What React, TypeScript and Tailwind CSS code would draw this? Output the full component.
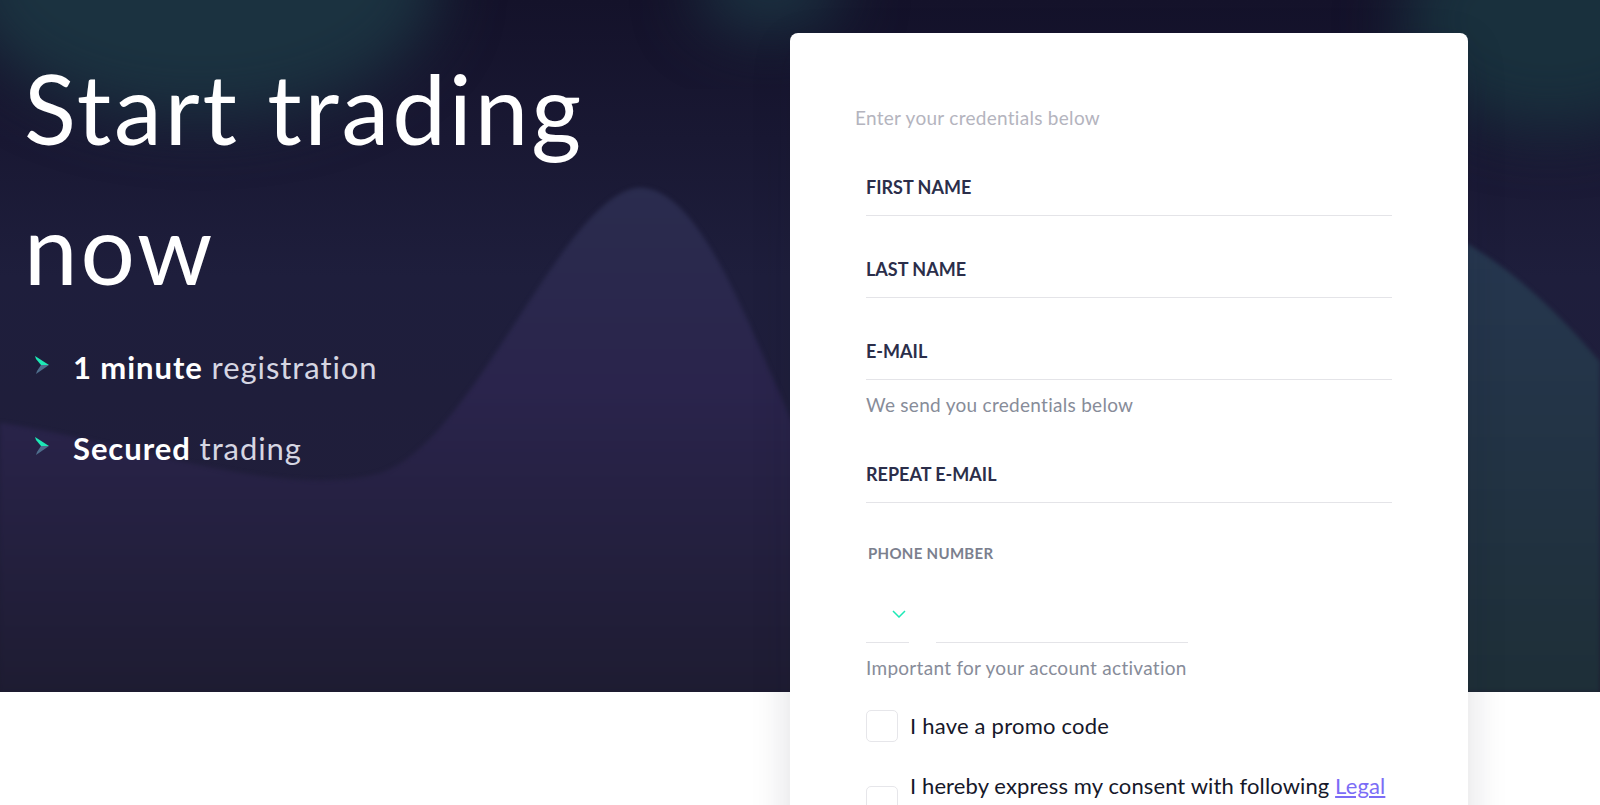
function HeroBackground() {
  return (
    <div className="absolute inset-x-0 top-0 h-[692px] overflow-hidden">
      <svg className="h-full w-full" viewBox="0 0 1600 692" preserveAspectRatio="none">
        <defs>
          <linearGradient id="base" x1="0" y1="0" x2="0" y2="692" gradientUnits="userSpaceOnUse">
            <stop offset="0" stopColor="#14122a" />
            <stop offset="0.4" stopColor="#1e1e3c" />
            <stop offset="0.75" stopColor="#201e3a" />
            <stop offset="1" stopColor="#1c1b2f" />
          </linearGradient>
          <linearGradient id="hill" x1="0" y1="190" x2="0" y2="692" gradientUnits="userSpaceOnUse">
            <stop offset="0" stopColor="#2a2c4e" />
            <stop offset="0.4" stopColor="#2a244c" />
            <stop offset="1" stopColor="#1e1c32" />
          </linearGradient>
          <linearGradient id="rightHill" x1="0" y1="200" x2="0" y2="692" gradientUnits="userSpaceOnUse">
            <stop offset="0" stopColor="#273852" />
            <stop offset="1" stopColor="#1e2f38" />
          </linearGradient>
          <filter id="soft" x="-60%" y="-60%" width="220%" height="220%" colorInterpolationFilters="sRGB">
            <feGaussianBlur stdDeviation="30" />
          </filter>
          <filter id="edge" x="-10%" y="-10%" width="120%" height="120%" colorInterpolationFilters="sRGB">
            <feGaussianBlur stdDeviation="2" />
          </filter>
        </defs>

        <rect width="1600" height="692" fill="url(#base)" />

        {/* teal glows along the top */}
        <ellipse cx="200" cy="-20" rx="240" ry="140" fill="#1b3240" filter="url(#soft)" />
        <ellipse cx="770" cy="-10" rx="75" ry="45" fill="#1b3140" filter="url(#soft)" />
        <ellipse cx="1550" cy="20" rx="150" ry="110" fill="#19303d" filter="url(#soft)" />

        {/* centre mountain + valley */}
        <path
          d="M0,423 C120,440 280,500 377,474 C470,450 560,200 636,188 C700,182 750,330 800,440 L1000,692 L0,692 Z"
          fill="url(#hill)"
          filter="url(#edge)"
        />

        {/* right mountain slope */}
        <path
          d="M1250,150 C1350,180 1420,220 1468,244 C1520,275 1565,320 1600,362 L1600,692 L1250,692 Z"
          fill="url(#rightHill)"
          filter="url(#edge)"
        />
      </svg>
    </div>
  )
}

function BulletIcon() {
  return (
    <svg width="14" height="18" viewBox="0 0 14 18" className="mt-[9px] shrink-0">
      <polygon points="0,0 14,9 6,9 1,3" fill="#1de9b6" />
      <polygon points="6,9 14,9 1,18 2,15" fill="#4e6d8c" />
    </svg>
  )
}

function LeftColumn() {
  const bullets = [
    { strong: '1 minute', rest: 'registration' },
    { strong: 'Secured', rest: 'trading' },
  ]

  return (
    <div className="w-[766px] shrink-0">
      <h1 className="mt-[5px] max-w-[640px] text-[96px] leading-[140px] font-normal tracking-[0.03em] text-white">
        Start trading now
      </h1>

      <ul className="mt-[29px] flex flex-col gap-[41px] pl-[11px]">
        {bullets.map((b) => (
          <li key={b.strong} className="flex items-start gap-6">
            <BulletIcon />
            <span className="text-[31px] leading-10 tracking-[0.03em] text-[#d6d6e2]">
              <b className="font-bold text-white">{b.strong}</b> {b.rest}
            </span>
          </li>
        ))}
      </ul>
    </div>
  )
}

function Field({ label }: { label: string }) {
  return (
    <div className="border-b border-[#e4e4e8] pb-4">
      <span className="block text-[18px] leading-6 font-bold text-[#2b2e4a]">{label}</span>
    </div>
  )
}

function Checkbox() {
  return <span className="h-8 w-8 shrink-0 rounded-[5px] border border-[#e6e6ea] bg-white" />
}

function SignupCard() {
  return (
    <div className="w-[678px] shrink-0 rounded-lg bg-white px-[76px] pt-[73px] pb-16 shadow-[0_12px_40px_rgba(20,20,40,0.14)]">
      <p className="-ml-[11px] text-[19px] leading-6 tracking-[0.015em] text-[#b4b4be]">
        Enter your credentials below
      </p>

      <div className="mt-[45px] flex flex-col gap-[41px]">
        <Field label="FIRST NAME" />
        <Field label="LAST NAME" />
        <Field label="E-MAIL" />
      </div>
      <p className="mt-[13px] text-[19px] leading-6 tracking-[0.015em] text-[#878c99]">
        We send you credentials below
      </p>

      <div className="mt-[45px]">
        <Field label="REPEAT E-MAIL" />
      </div>

      <p className="mt-10 pl-[2px] text-[15px] leading-5 font-bold tracking-[0.02em] text-[#7b808e]">
        PHONE NUMBER
      </p>
      <div className="flex gap-[27px]">
        <div className="flex h-20 w-[43px] items-end justify-end border-b border-[#e4e4e8] pr-[3px] pb-[24px]">
          <svg width="14" height="8" viewBox="0 0 14 8" fill="none">
            <polyline points="1,1 7,7 13,1" stroke="#1de9b6" strokeWidth="1.5" />
          </svg>
        </div>
        <div className="h-20 w-[252px] border-b border-[#e4e4e8]" />
      </div>
      <p className="mt-[13px] text-[19px] leading-6 tracking-[0.015em] text-[#878c99]">
        Important for your account activation
      </p>

      <label className="mt-[30px] flex items-center gap-3">
        <Checkbox />
        <span className="text-[22px] leading-8 tracking-[0.01em] text-[#16182a]">I have a promo code</span>
      </label>

      <label className="mt-[28px] flex items-center gap-3">
        <Checkbox />
        <span className="text-[22px] leading-8 tracking-[0.005em] text-[#16182a]">
          I hereby express my consent with following{' '}
          <a href="#" className="text-[#7b6cf6] underline">
            Legal
          </a>{' '}
          documents and confirm I have read them
        </span>
      </label>
    </div>
  )
}

export default function App() {
  return (
    <div className="relative min-h-screen bg-white font-['Lato',sans-serif]">
      <HeroBackground />
      <div className="relative flex pt-[33px] pl-6">
        <LeftColumn />
        <SignupCard />
      </div>
    </div>
  )
}
